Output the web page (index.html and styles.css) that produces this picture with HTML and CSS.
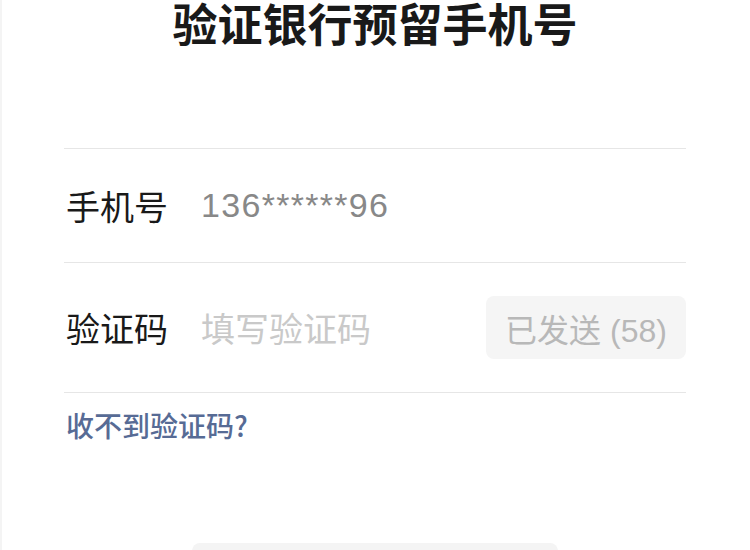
FILE: index.html
```html
<!DOCTYPE html>
<html>
<head>
    <title>验证银行预留手机号</title>
    <link rel="stylesheet" href="styles.css">
</head>
<body>
    <div class="page">
        <h1 class="title">验证银行预留手机号</h1>

        <div class="form">
            <div class="row">
                <span class="label">手机号</span>
                <span class="value">136******96</span>
            </div>
            <div class="row row-code">
                <span class="label">验证码</span>
                <span class="placeholder">填写验证码</span>
                <button class="send-btn" disabled>已发送 (58)</button>
            </div>
        </div>

        <a class="help-link">收不到验证码?</a>

        <div class="actions">
            <button class="next-btn" disabled></button>
        </div>
    </div>
</body>
</html>
```

FILE: styles.css
```css
body {
    margin: 0;
    background-color: #ffffff;
    font-family: "Liberation Sans", "Noto Sans CJK SC", sans-serif;
    color: #191919;
}

.page {
    height: 550px;
    overflow: hidden;
    box-shadow: inset 2px 0 0 #f4f4f4;
}

.title {
    margin: 0;
    padding-top: 2px;
    text-align: center;
    font-size: 45px;
    line-height: 50px;
    font-weight: bold;
}

.form {
    margin: 96px 64px 0;
    border-top: 1px solid #e6e6e6;
}

.row {
    display: flex;
    align-items: center;
    height: 113px;
    border-bottom: 1px solid #e6e6e6;
    font-size: 34px;
}

.row-code {
    height: 129px;
}

.label {
    width: 135px;
    padding-left: 2px;
}

.value {
    color: #888888;
    letter-spacing: 1.3px;
}

.placeholder {
    flex: 1;
    color: #c9c9c9;
}

.send-btn {
    width: 200px;
    height: 63px;
    border: none;
    border-radius: 8px;
    background-color: #f5f5f5;
    color: #b8b8b8;
    font-family: inherit;
    font-size: 32px;
}

.help-link {
    display: block;
    margin: 12px 0 0 66px;
    font-family: "Noto Sans CJK SC", sans-serif;
    font-size: 28px;
    line-height: 40px;
    font-weight: 500;
    color: #576b95;
}

.actions {
    display: flex;
    justify-content: center;
    margin-top: 98px;
}

.next-btn {
    width: 366px;
    height: 80px;
    border: none;
    border-radius: 8px;
    background-color: #f4f4f4;
}
```
